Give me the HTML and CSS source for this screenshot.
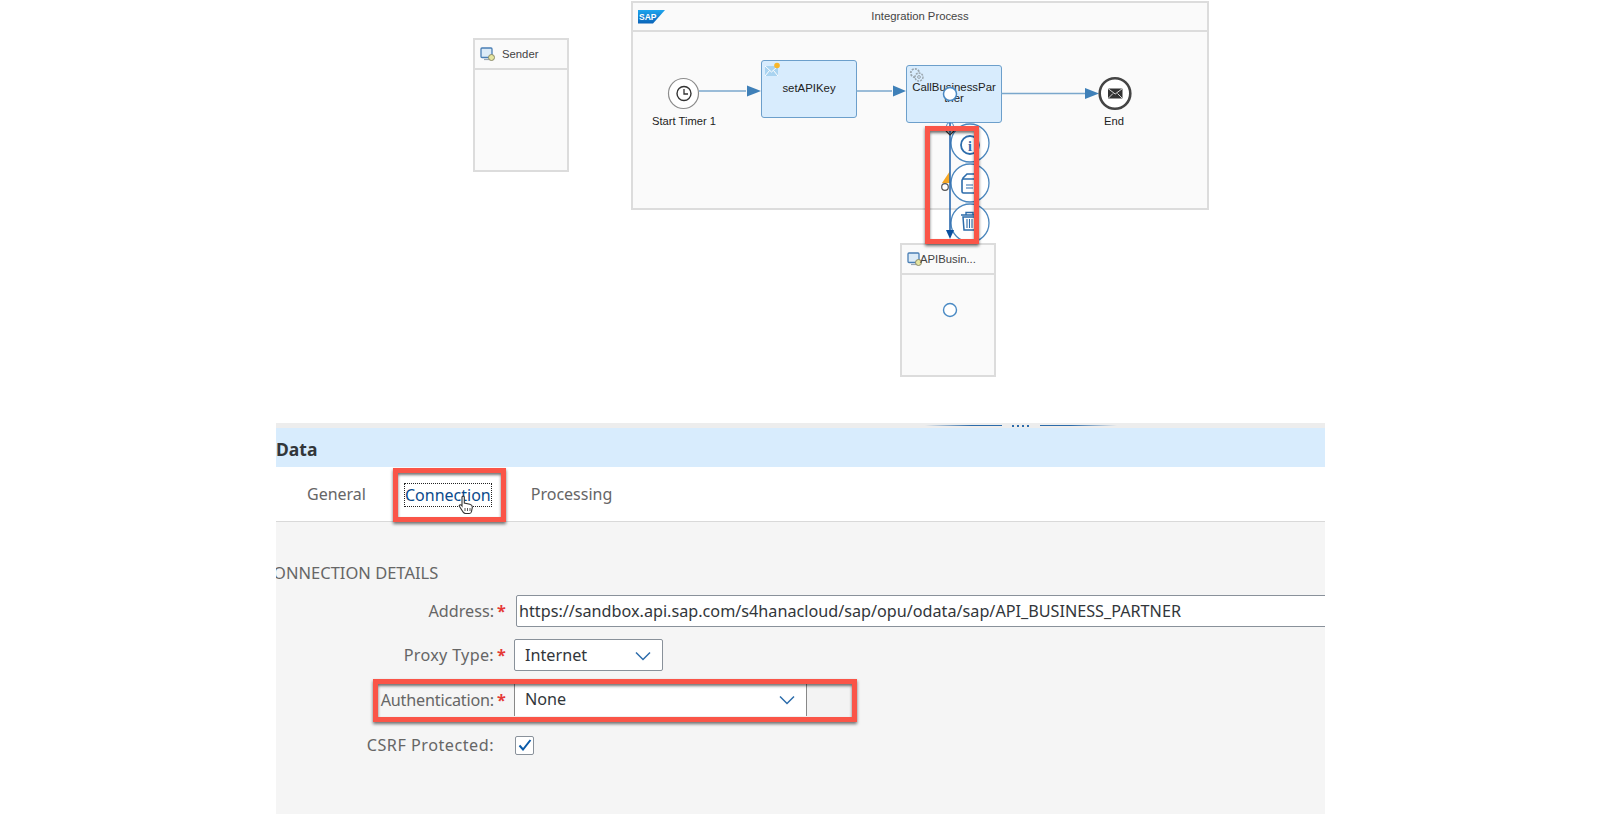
FILE: index.html
```html
<!DOCTYPE html>
<html>

<head>
	<meta http-equiv="Content-Type" content="text/html; charset=utf-8" />
	<title>Integration Process</title>
	<link rel="stylesheet" href="styles.css">
</head>

<body>
	<!-- iflow diagram -->
	<div class="canvas">
		<div class="pool pool-sender">
			<div class="pool-head">
				<svg class="sys-icon" width="16" height="16" viewBox="0 0 16 16"><rect x="1" y="2" width="11" height="9.500" rx="1" fill="#dcebf7" stroke="#4a7fb5" stroke-width="1.300"/><path d="M4 13.500h6" stroke="#9aa7b2" stroke-width="1.200"/><circle cx="11.500" cy="11.500" r="3" fill="#e6e6a0" stroke="#8a8a6a"/></svg>
				<span class="pool-name">Sender</span>
			</div>
		</div>

		<div class="pool pool-process">
			<div class="pool-head">
				<svg class="sap-logo" width="28" height="14" viewBox="0 0 28 14"><defs><linearGradient id="sapblue" x1="0" y1="0" x2="0" y2="1"><stop offset="0" stop-color="#1ea5ee"/><stop offset="1" stop-color="#0a63b8"/></linearGradient></defs><polygon points="0,0 27,0 15,13.500 0,13.500" fill="url(#sapblue)"/><text x="1" y="10" class="sap-text">SAP</text></svg>
				<span class="process-name">Integration Process</span>
			</div>
		</div>

		<div class="pool pool-receiver">
			<div class="pool-head">
				<svg class="sys-icon" width="16" height="16" viewBox="0 0 16 16"><rect x="1" y="2" width="11" height="9.500" rx="1" fill="#dcebf7" stroke="#4a7fb5" stroke-width="1.300"/><path d="M4 13.500h6" stroke="#9aa7b2" stroke-width="1.200"/><circle cx="11.500" cy="11.500" r="3" fill="#e6e6a0" stroke="#8a8a6a"/></svg>
				<span class="pool-name">APIBusin...</span>
			</div>
		</div>

		<div class="step step-key">
			<svg class="step-icon" width="17" height="15" viewBox="0 0 17 15"><path d="M1 4h13v10H1z" fill="#a9d3f0"/><path d="M1 4l6.500 6L14 4M1 14l4.500-5.500M14 14L9.500 8.500" fill="none" stroke="#fff"/><circle cx="13" cy="3.500" r="2.800" fill="#f8b62a"/></svg>
			<span>setAPIKey</span>
		</div>
		<div class="step step-call">
			<svg class="step-icon" width="16" height="16" viewBox="0 0 16 16"><circle cx="6" cy="6" r="4.200" fill="none" stroke="#9aa5ad" stroke-width="1.800" stroke-dasharray="2 1.200"/><circle cx="10" cy="10" r="4" fill="#d8ecfd" stroke="#9aa5ad" stroke-width="1.400" stroke-dasharray="2 1"/><circle cx="10" cy="10" r="1.400" fill="none" stroke="#9aa5ad"/></svg>
			<span>CallBusinessPar<br>tner</span>
		</div>

		<div class="event-label label-start">Start Timer 1</div>
		<div class="event-label label-end">End</div>

		<svg class="wires" width="1600" height="423" viewBox="0 0 1600 423">
			<!-- sequence flows -->
			<path d="M699 91H746" class="flow"/>
			<polygon points="747,85.500 761,91 747,96.500" class="flow-head"/>
			<path d="M856 91H892" class="flow"/>
			<polygon points="893,85.500 906,91 893,96.500" class="flow-head"/>
			<path d="M1001 93.500H1086" class="flow"/>
			<polygon points="1085,88 1099,93.500 1085,99" class="flow-head"/>

			<!-- start timer -->
			<circle cx="683.500" cy="93.500" r="15" fill="#fff" stroke="#8c8c8c" stroke-width="1.200"/>
			<circle cx="684" cy="93.500" r="7" fill="none" stroke="#333" stroke-width="1.400"/>
			<path d="M684 89v5h4" fill="none" stroke="#333" stroke-width="1.300"/>

			<!-- end event -->
			<circle cx="1115" cy="93.500" r="15.300" fill="#fff" stroke="#444" stroke-width="2.600"/>
			<rect x="1108" y="88.500" width="14.500" height="10" fill="#333"/>
			<path d="M1108 88.500l7.200 5.500 7.300-5.500M1108 98.500l5-5M1122.500 98.500l-5-5" fill="none" stroke="#fff" stroke-width=".8"/>

			<!-- context pad -->
			<circle cx="950" cy="94" r="6.500" fill="#fff" stroke="#4a8ac4" stroke-width="1.500"/>
			<circle cx="970" cy="143" r="19" fill="#fff" stroke="#4a86bd" stroke-width="1.300"/>
			<circle cx="970" cy="183" r="19" fill="#fff" stroke="#4a86bd" stroke-width="1.300"/>
			<circle cx="970" cy="223" r="19" fill="#fff" stroke="#4a86bd" stroke-width="1.300"/>

			<!-- info -->
			<circle cx="970" cy="145" r="9" fill="none" stroke="#2c6cab" stroke-width="1.800"/>
			<text x="970" y="150.500" class="info-i">i</text>

			<!-- copy -->
			<path d="M963 181v-3l4-4h9v5" fill="none" stroke="#2c6cab" stroke-width="1.600"/>
			<rect x="962" y="179" width="15" height="14" rx="1.500" fill="#fff" stroke="#2c6cab" stroke-width="1.600"/>
			<path d="M966 185h7M966 188h7" stroke="#2c6cab" stroke-width="1.200"/>

			<!-- trash -->
			<path d="M961 215h17M966 215v-2.500h7v2.500" fill="none" stroke="#2c6cab" stroke-width="1.400"/>
			<path d="M963 217l1 13h11l1-13z" fill="none" stroke="#2c6cab" stroke-width="1.500"/>
			<path d="M967 219v9M969.500 219v9M972 219v9" stroke="#2c6cab" stroke-width="1.100"/>

			<!-- warning, half hidden behind the line -->
			<polygon points="950,171 950,183 942,183" fill="#f5a623"/>
			<circle cx="945" cy="187" r="3.300" fill="#fff" stroke="#555" stroke-width="1.200"/>

			<!-- connection to the receiver -->
			<circle cx="950" cy="126" r="3.500" fill="#fff" stroke="#4a8ac4"/>
			<path d="M950 123V232" stroke="#1c5fa8" stroke-width="1.500"/>
			<path d="M946 131l4 4 4-4" fill="none" stroke="#333" stroke-width="1.200"/>
			<polygon points="946,230 954,230 950,239" fill="#0a4f9e"/>

			<circle cx="950" cy="310" r="6.500" fill="#fff" stroke="#4a8ac4" stroke-width="1.400"/>
		</svg>

		<div class="mark mark-flow"></div>
	</div>

	<!-- property sheet -->
	<div class="sheet">
		<div class="sash">
			<span class="sash-line sash-left"></span>
			<span class="sash-dots"></span>
			<span class="sash-line sash-right"></span>
		</div>
		<h2 class="sheet-title">Data</h2>
		<ul class="tabs">
			<li class="tab-general">General</li>
			<li class="tab-on"><span>Connection</span>
				<svg class="cursor" width="16" height="20" viewBox="0 0 16 20"><path d="M4 2.200c0-1.500 2.300-1.500 2.300 0V8l5.500 1.300c1.800.5 2.700 1.500 2.500 3.200l-.8 4c-.2 1.200-1 2-2.200 2H7.500c-1 0-1.700-.5-2.300-1.300L1.500 11.500c-.8-1.300 1-2.500 2-1.200L4 11z" fill="#fff" stroke="#333" stroke-width="1.100"/><path d="M7 13v3M9.500 13v3M12 13v3" stroke="#555"/></svg>
			</li>
			<li>Processing</li>
		</ul>
		<div class="details">
			<h3 class="details-title">CONNECTION DETAILS</h3>
			<div class="row row-address">
				<label class="lbl">Address:<b>*</b></label>
				<div class="field field-address">https://sandbox.api.sap.com/s4hanacloud/sap/opu/odata/sap/API_BUSINESS_PARTNER</div>
			</div>
			<div class="row row-proxy">
				<label class="lbl lbl-proxy">Proxy Type:<b>*</b></label>
				<div class="field field-select field-proxy">Internet
					<svg class="chev" width="16" height="10" viewBox="0 0 16 10"><path d="M1 1.500l7 7 7-7" fill="none" stroke="#2c6cab" stroke-width="1.500"/></svg>
				</div>
			</div>
			<div class="row row-auth">
				<label class="lbl lbl-auth">Authentication:<b>*</b></label>
				<div class="field field-select field-auth">None
					<svg class="chev" width="16" height="10" viewBox="0 0 16 10"><path d="M1 1.500l7 7 7-7" fill="none" stroke="#2c6cab" stroke-width="1.500"/></svg>
				</div>
				<div class="auth-rest"></div>
			</div>
			<div class="row row-csrf">
				<label class="lbl lbl-csrf">CSRF Protected:<b class="no-star"></b></label>
				<span class="check"><svg width="14" height="12" viewBox="0 0 14 12"><path d="M1.500 6.500l3.500 4 7.500-9.500" fill="none" stroke="#0a5aa8" stroke-width="2"/></svg></span>
			</div>
		</div>
		<div class="mark mark-auth"></div>
	</div>
</body>

</html>
```
FILE: styles.css
```css
body,
h2,
h3,
ul,
li {
	margin: 0;
	padding: 0;
}

body {
	background: #fff;
	color: #333;
	font: 11px/1.2 "Liberation Sans", Arial, sans-serif;
	overflow: hidden;
}

ul {
	list-style-type: none;
}

/* diagram */
.canvas {
	position: relative;
	height: 423px;
}

.wires {
	position: absolute;
	left: 0;
	top: 0;
}

.pool {
	position: absolute;
	box-sizing: border-box;
	background: #fafafa;
	border: 2px solid #dcdcdc;
}

.pool-head {
	position: relative;
	display: flex;
	align-items: center;
	height: 28px;
	border-bottom: 2px solid #dcdcdc;
	color: #444;
	font-size: 11.3px;
}

.pool-sender {
	left: 473px;
	top: 38px;
	width: 96px;
	height: 134px;
}

.pool-process {
	left: 631px;
	top: 1px;
	width: 578px;
	height: 209px;
}

.pool-process .pool-head {
	height: 27px;
}

.pool-receiver {
	left: 900px;
	top: 243px;
	width: 96px;
	height: 134px;
}

.sys-icon {
	margin-left: 5px;
	flex: none;
}

.pool-name {
	margin-left: 6px;
	padding-top: 1px;
}

.pool-receiver .pool-name {
	margin-left: -3px;
}

.sap-logo {
	margin-left: 5px;
}

.sap-text {
	fill: #fff;
	font: bold 8.500px "Liberation Sans", sans-serif;
}

.process-name {
	position: absolute;
	left: 0;
	right: 0;
	padding-top: 1px;
	text-align: center;
}

.step {
	position: absolute;
	box-sizing: border-box;
	width: 96px;
	height: 58px;
	display: flex;
	align-items: center;
	justify-content: center;
	text-align: center;
	background: #d8ecfd;
	border: 1px solid #6c9fcb;
	border-radius: 3px;
	color: #222;
	font-size: 11.4px;
	line-height: 11px;
}

.step-key {
	left: 761px;
	top: 60px;
}

.step-key span {
	margin-top: -2px;
}

.step-call {
	left: 906px;
	top: 65px;
}

.step-call span {
	margin-top: -3px;
}

.step-icon {
	position: absolute;
	left: 2px;
	top: 1px;
}

.event-label {
	position: absolute;
	color: #222;
	font-size: 11.2px;
	white-space: nowrap;
}

.label-start {
	left: 652px;
	top: 115px;
}

.label-end {
	left: 1104px;
	top: 115px;
}

.info-i {
	fill: #2c6cab;
	font: bold 14px "Liberation Serif", serif;
	text-anchor: middle;
}

.flow {
	fill: none;
	stroke: #7aa7cc;
	stroke-width: 1.500;
}

.flow-head {
	fill: #3f80b8;
}

/* red highlight frames */
.mark {
	position: absolute;
	box-sizing: border-box;
	border: 5px solid #fa5548;
	box-shadow: 0 2px 3px rgba(0, 0, 0, .55), inset 0 2px 3px rgba(0, 0, 0, .55);
}

.mark-flow {
	left: 925px;
	top: 126px;
	width: 54px;
	height: 118px;
}

.mark-auth {
	left: 97px;
	top: 256px;
	width: 484px;
	height: 43px;
}

/* property sheet */
.sheet {
	position: relative;
	width: 1049px;
	height: 391px;
	margin-left: 276px;
	background: #f5f5f5;
	overflow: hidden;
	font-family: "Noto Sans", "Open Sans", sans-serif;
	color: #32363a;
}

.sash {
	display: flex;
	align-items: center;
	height: 5px;
	padding-left: 649px;
	background: #ededed;
}

.sash-line {
	width: 77px;
	height: 1.500px;
	background: #2c6cab;
}

.sash-left {
	background: linear-gradient(to right, transparent, #2c6cab 60%);
}

.sash-right {
	background: linear-gradient(to left, transparent, #2c6cab 60%);
}

.sash-dots {
	width: 18px;
	height: 2px;
	margin: 0 10px;
	background: repeating-linear-gradient(to right, #2c6cab 0 2px, transparent 2px 5px);
}

.sheet-title {
	box-sizing: border-box;
	height: 39px;
	padding-top: 4px;
	background: #d8ecfd;
	font-size: 17.5px;
	font-weight: 700;
	line-height: 35px;
}

.tabs {
	display: flex;
	align-items: center;
	height: 55px;
	box-sizing: border-box;
	padding-left: 31px;
	background: #fff;
	border-bottom: 1px solid #d9d9d9;
	color: #666;
	font-size: 16px;
}

.tabs li {
	position: relative;
	padding-top: 2px;
}

.tabs .tab-general {
	margin-right: 27px;
}

.tabs .tab-on {
	display: flex;
	align-items: center;
	align-self: flex-start;
	box-sizing: border-box;
	height: 54px;
	margin: 1px 25px 0 0;
	padding: 0 10px 0 7px;
	color: #0a4a8c;
	border: 5px solid #fa5548;
	box-shadow: 0 2px 3px rgba(0, 0, 0, .55), inset 0 2px 3px rgba(0, 0, 0, .55);
}

.tab-on span {
	display: block;
	outline: 1px dotted #222;
	line-height: 22px;
}

.cursor {
	position: absolute;
	left: 60px;
	top: 22px;
}

.details {
	padding-top: 40px;
}

.details-title {
	margin: 0 0 11px -13px;
	color: #666;
	font-size: 16.5px;
	font-weight: 400;
	line-height: 22px;
}

.row {
	display: flex;
	align-items: center;
	font-size: 16.2px;
}

.lbl {
	box-sizing: border-box;
	width: 238px;
	flex: none;
	padding-top: 2px;
	text-align: right;
	color: #666;
	white-space: nowrap;
}

.lbl-proxy {
	letter-spacing: .3px;
}

.lbl-auth {
	letter-spacing: -.2px;
}

.lbl-csrf {
	letter-spacing: .5px;
}

.lbl b {
	display: inline-block;
	width: 20px;
	box-sizing: border-box;
	padding-left: 3px;
	text-align: left;
	letter-spacing: 0;
	color: #e53935;
	font-weight: 700;
}

.field {
	box-sizing: border-box;
	height: 32px;
	color: #32363a;
	background: #fff;
	border: 1px solid #89919a;
	border-radius: 2px;
	line-height: 31px;
	white-space: nowrap;
}

.row-address {
	height: 32px;
}

.field-address {
	flex: 1;
	margin-left: 2px;
	margin-right: -4px;
	padding-left: 2px;
}

.row-proxy {
	height: 32px;
	margin-top: 12px;
}

.field-select {
	position: relative;
	padding-left: 10px;
}

.field-proxy {
	width: 149px;
}

.chev {
	position: absolute;
	right: 11px;
	top: 11px;
}

.row-auth {
	height: 32px;
	margin-top: 13px;
}

.field-auth {
	width: 293px;
	border-radius: 0;
	border-width: 0 1px;
	border-color: #888;
}

.auth-rest {
	width: 44px;
	height: 32px;
	background: #f3f3f3;
}

.row-csrf {
	height: 20px;
	margin-top: 19px;
}

.no-star {
	padding: 0;
}

.check {
	display: flex;
	align-items: center;
	justify-content: center;
	box-sizing: border-box;
	width: 19px;
	height: 19px;
	margin-left: 1px;
	background: #fff;
	border: 1px solid #89919a;
	border-radius: 2px;
}
```
